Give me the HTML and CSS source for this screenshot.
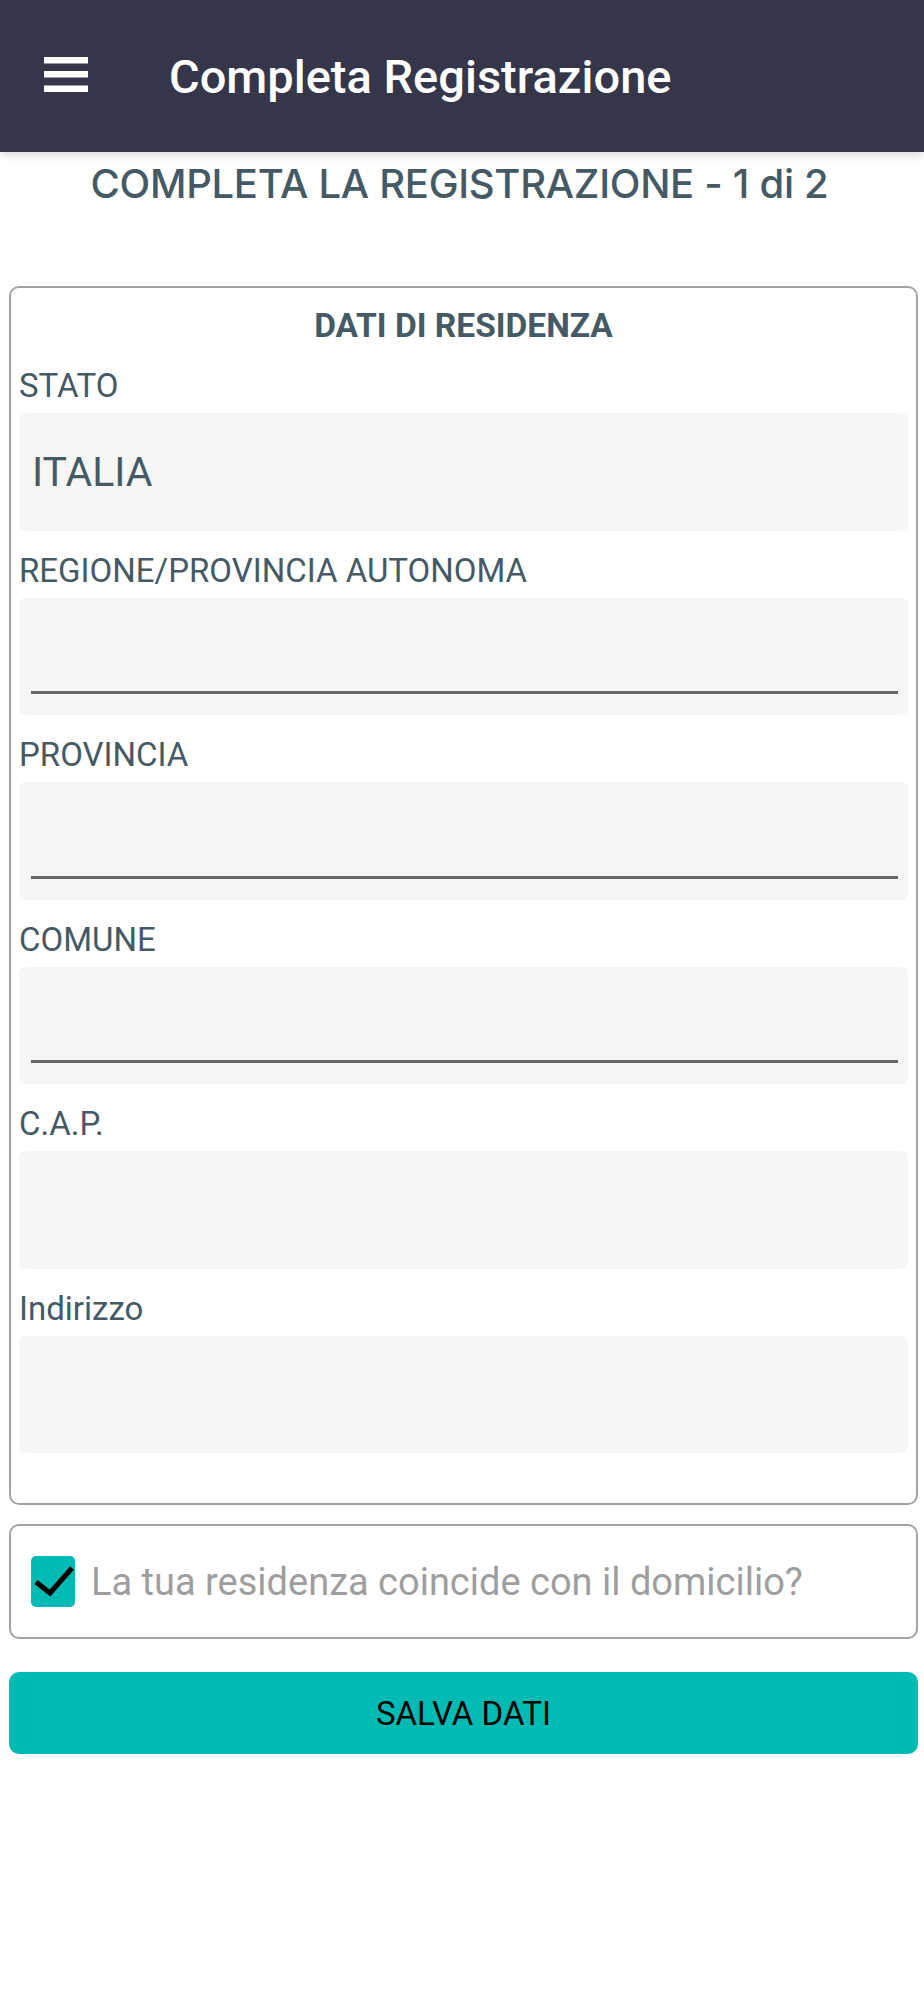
FILE: index.html
```html
<!DOCTYPE html>
<html lang="it">
<head>
<meta charset="utf-8">
<title>Completa Registrazione</title>
<link rel="stylesheet" href="styles.css">
</head>
<body>
<header class="appbar">
  <span class="menu" aria-label="Menu">
    <svg width="44" height="35" viewBox="0 0 44 35"><rect x="0" y="0" width="44" height="6.5" fill="#fff"/><rect x="0" y="14" width="44" height="6.5" fill="#fff"/><rect x="0" y="28.5" width="44" height="6.5" fill="#fff"/></svg>
  </span>
  <h1 class="appbar-title">Completa Registrazione</h1>
</header>
<main class="page">
  <h2 class="step-title">COMPLETA LA REGISTRAZIONE - 1 di 2</h2>
  <section class="card">
    <h3 class="card-title">DATI DI RESIDENZA</h3>
    <div class="field">
      <label class="field-label">STATO</label>
      <div class="input input-value">ITALIA</div>
    </div>
    <div class="field">
      <label class="field-label">REGIONE/PROVINCIA AUTONOMA</label>
      <div class="input input-select"><span class="underline"></span></div>
    </div>
    <div class="field">
      <label class="field-label">PROVINCIA</label>
      <div class="input input-select"><span class="underline"></span></div>
    </div>
    <div class="field">
      <label class="field-label">COMUNE</label>
      <div class="input input-select"><span class="underline"></span></div>
    </div>
    <div class="field">
      <label class="field-label">C.A.P.</label>
      <div class="input"></div>
    </div>
    <div class="field">
      <label class="field-label">Indirizzo</label>
      <div class="input"></div>
    </div>
  </section>
  <div class="check-card">
    <span class="checkbox">
      <svg width="44" height="51" viewBox="0 0 44 51"><path d="M5 26 L19 37 L41 12" fill="none" stroke="#000" stroke-width="5" stroke-linejoin="miter"/></svg>
    </span>
    <span class="check-label">La tua residenza coincide con il domicilio?</span>
  </div>
  <button class="save">SALVA DATI</button>
</main>
</body>
</html>
```
FILE: styles.css
```css
html, body {
  margin: 0;
  padding: 0;
  background: #ffffff;
}
body {
  font-family: Roboto, "Noto Sans", sans-serif;
}
.appbar {
  position: relative;
  z-index: 1;
  height: 152px;
  box-sizing: border-box;
  background: #35364a;
  display: flex;
  align-items: center;
  padding-left: 44px;
  box-shadow: 0 3px 8px rgba(0, 0, 0, 0.14);
}
.menu {
  display: block;
  width: 44px;
  height: 35px;
  margin-top: -3px;
}
.menu svg {
  display: block;
}
.appbar-title {
  margin: 0 0 0 81px;
  font-family: Roboto, sans-serif;
  font-weight: 500;
  font-size: 47px;
  color: #ffffff;
}
.page {
  padding: 0 6px 0 9px;
}
.step-title {
  margin: 0;
  padding: 7.5px 8px 0 0;
  font-family: Inter, "Open Sans", sans-serif;
  font-weight: 500;
  font-size: 40px;
  line-height: 48px;
  letter-spacing: -0.3px;
  color: #455a64;
  text-align: center;
}
.card {
  margin-top: 78.5px;
  border: 2px solid #a3a3a3;
  border-radius: 10px;
  padding: 18px 8px 50px 8px;
}
.card-title {
  margin: 0;
  font-family: Roboto, sans-serif;
  font-weight: 700;
  font-size: 33.5px;
  line-height: 40px;
  color: #455a64;
  text-align: center;
}
.field-label {
  display: block;
  margin: 20px 0 7px 0;
  font-size: 33px;
  line-height: 40px;
  color: #455a64;
}
.input {
  height: 117.5px;
  box-sizing: border-box;
  background: #f6f6f6;
  border-radius: 6px;
}
.input-value {
  display: flex;
  align-items: center;
  padding-left: 13px;
  font-size: 41px;
  color: #455a64;
}
.input-select {
  display: flex;
  flex-direction: column;
  justify-content: flex-end;
  padding: 0 10px 21px 12px;
}
.underline {
  display: block;
  height: 3px;
  background: #686868;
}
.check-card {
  margin-top: 19px;
  height: 115px;
  box-sizing: border-box;
  border: 2px solid #a3a3a3;
  border-radius: 10px;
  display: flex;
  align-items: center;
  padding-left: 20px;
}
.checkbox {
  flex: none;
  width: 44px;
  height: 51px;
  background: #00bbb4;
  border-radius: 5px;
}
.checkbox svg {
  display: block;
}
.check-label {
  margin-left: 16px;
  font-size: 38px;
  color: #9e9e9e;
  white-space: nowrap;
}
.save {
  display: block;
  width: 100%;
  margin-top: 33px;
  height: 82px;
  border: none;
  border-radius: 10px;
  background: #00bbb4;
  font-family: Roboto, sans-serif;
  font-size: 33px;
  color: #000000;
  padding: 0;
}
```
